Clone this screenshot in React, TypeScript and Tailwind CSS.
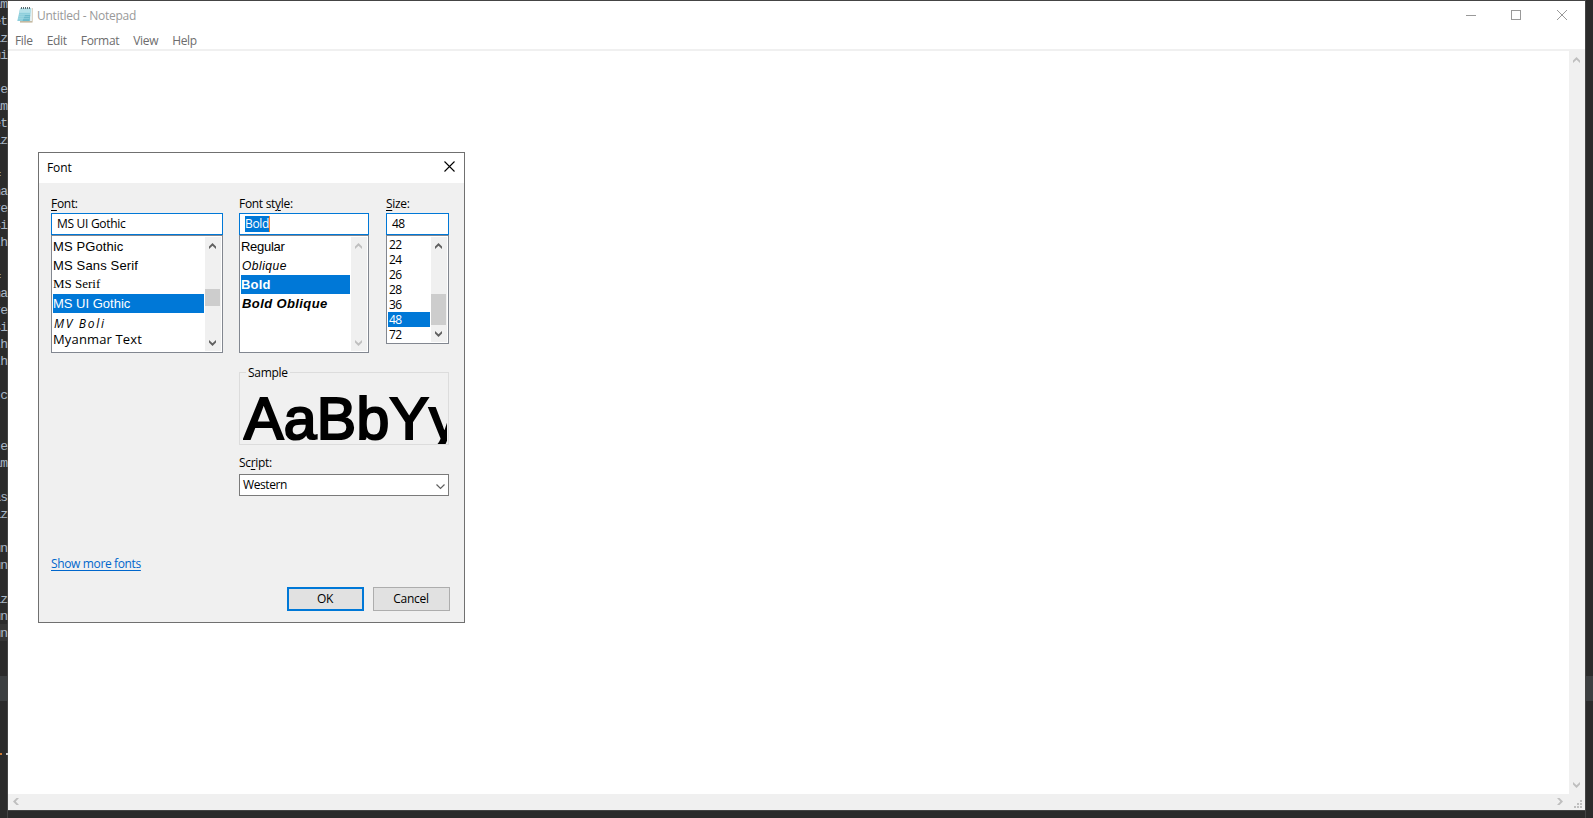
import type { ReactNode } from "react";

const codeRows = [
  "am", "et", "iz", "ui", "", "e", "am", "et", "iz", "", "= ", "ha", "re", "si", "th", "", "= ", "ha", "re", "si", "th", "th",
  "", "c", "\" ", "", "e", "am", "", "as", "iz", "", "un", "un", "", "iz", "un", "un",
];

type Direction = "up" | "down" | "left" | "right";

const chevrons: Record<Direction, string> = {
  up: "M3.5 0 L7 3.5 V6 L3.5 2.7 L0 6 V3.5 Z",
  down: "M3.5 6 L7 2.5 V0 L3.5 3.3 L0 0 V2.5 Z",
  left: "M0 3.5 L3.5 0 H6 L2.7 3.5 L6 7 H3.5 Z",
  right: "M6 3.5 L2.5 0 H0 L3.3 3.5 L0 7 H2.5 Z",
};

function Chevron({ dir, className }: { dir: Direction; className: string }) {
  const vertical = dir === "up" || dir === "down";
  return (
    <svg width={vertical ? 7 : 6} height={vertical ? 6 : 7} className={className}>
      <path d={chevrons[dir]} fill="currentColor" />
    </svg>
  );
}

function NotepadIcon() {
  return (
    <svg width="16" height="17" viewBox="0 0 16 17">
      <path d="M13 2 H15.5 V16.5 H3 V15 H13 Z" fill="#b9a98a" />
      <path d="M3.5 2 H15 V15.3 H3 Z" fill="#e4eff1" />
      <path d="M3.2 2 H14 L12.6 15 H0.3 Z" fill="#8fcfdc" />
      <path d="M3.2 2 H14 L13.4 7 H2.2 Z" fill="#b5e1e9" />
      <path d="M8 9 H13.2 L12.6 15 H5.5 Z" fill="#6dbacb" />
      <path d="M2.6 6.5 H13 M2.2 8.5 H12.8 M1.8 10.5 H12.6 M1.2 12.5 H12.4" stroke="#a5dbe5" strokeWidth="0.5" />
      <path d="M4.5 1 V3 M6.5 1 V3 M8.5 1 V3 M10.5 1 V3 M12.5 1 V3" stroke="#596b70" strokeWidth="1" />
    </svg>
  );
}

function Scrollbar({ active, children }: { active: boolean; children?: ReactNode }) {
  const tone = active ? "text-[#606060]" : "text-[#bfbfbf]";
  return (
    <div className="flex w-4 shrink-0 flex-col bg-[#f0f0f0]">
      <Chevron dir="up" className={`${tone} ml-1 mt-[6px] shrink-0`} />
      <div className="flex-1">{children}</div>
      <Chevron dir="down" className={`${tone} mb-[5px] ml-1 shrink-0`} />
    </div>
  );
}

function Label({ children, className = "" }: { children: ReactNode; className?: string }) {
  return <div className={`h-[18px] whitespace-pre leading-[17px] ${className}`}>{children}</div>;
}

function Key({ children }: { children: ReactNode }) {
  return <span className="underline underline-offset-2">{children}</span>;
}

function Dialog() {
  return (
    <div className="absolute left-[38px] top-[152px] flex h-[471px] w-[427px] flex-col border border-[#707070] bg-[#f0f0f0] text-black">
      <div className="flex h-[30px] shrink-0 items-start justify-between bg-white pl-2 pr-[9px] pt-[6px]">
        <span className="leading-[17px] tracking-[-0.1px]">Font</span>
        <svg width="11" height="11" className="mt-[2px]">
          <path d="M0.5 0.5 L10.5 10.5 M10.5 0.5 L0.5 10.5" stroke="#000" strokeWidth="1.1" />
        </svg>
      </div>

      <div className="flex pl-3 pt-3">
        <div className="w-[172px]">
          <Label className="tracking-[-0.3px]"><Key>F</Key>ont:</Label>
          <div className="h-[22px] border border-[#0078d7] bg-white pl-[5px] pt-[1px] leading-[17px] tracking-[-0.3px]">MS UI Gothic</div>
          <div className="flex h-[118px] justify-between border border-[#828790] bg-white p-px">
            <div className="w-[151px] overflow-hidden whitespace-nowrap font-['Liberation_Sans'] text-[13px] leading-[19px]">
              <div className="h-[19px] tracking-[0.1px]">MS PGothic</div>
              <div className="h-[19px] tracking-[0.15px]">MS Sans Serif</div>
              <div className="h-[19px] font-['Liberation_Serif'] text-[13px] leading-[18px]">MS Serif</div>
              <div className="h-[19px] bg-[#0078d7] text-white">MS UI Gothic</div>
              <div className="h-[19px] pl-px font-['Open_Sans'] text-[12px] italic leading-[21px] tracking-[1.7px]">MV Boli</div>
              <div className="h-[19px] font-['Open_Sans'] text-[13px] leading-[14px] tracking-[0.15px]">Myanmar Text</div>
            </div>
            <Scrollbar active><div className="mt-10 h-[17px] w-[15px] bg-[#cdcdcd]" /></Scrollbar>
          </div>
        </div>

        <div className="ml-4 w-[130px]">
          <Label className="tracking-[-0.3px]">Font st<Key>y</Key>le:</Label>
          <div className="flex h-[22px] border border-[#0078d7] bg-white pl-[5px] pt-[2px]">
            <span className="h-4 border-r border-[#ff8728] bg-[#0078d7] leading-[15px] tracking-[-0.3px] text-white">Bold</span>
          </div>
          <div className="flex h-[118px] justify-between border border-[#828790] bg-white p-px">
            <div className="w-[109px] overflow-hidden whitespace-nowrap font-['Liberation_Sans'] text-[13px] leading-[19px]">
              <div className="tracking-[-0.3px]">Regular</div>
              <div className="pl-px text-[12px] italic leading-[19px] tracking-[0.5px]">
                <div className="h-[19px] leading-[20px]">Oblique</div>
              </div>
              <div className="bg-[#0078d7] font-bold tracking-[0.2px] text-white">Bold</div>
              <div className="pl-px font-bold italic tracking-[0.4px]">Bold Oblique</div>
            </div>
            <Scrollbar active={false} />
          </div>
        </div>

        <div className="ml-[17px] w-[63px]">
          <Label className="tracking-[-0.3px]"><Key>S</Key>ize:</Label>
          <div className="h-[22px] border border-[#0078d7] bg-white pl-[5px] pt-[1px] leading-[17px] tracking-[-0.5px]">48</div>
          <div className="flex h-[109px] justify-between border border-[#828790] bg-white p-px">
            <div className="w-[42px] leading-[15px] tracking-[-0.6px]">
              {[22, 24, 26, 28, 36, 48, 72].map((n) => (
                <div key={n} className={n === 48 ? "h-[15px] bg-[#0078d7] pl-px text-white" : "h-[15px] pl-px"}>{n}</div>
              ))}
            </div>
            <Scrollbar active><div className="mt-[45px] h-[31px] w-[15px] bg-[#cdcdcd]" /></Scrollbar>
          </div>
        </div>
      </div>

      <div className="ml-[200px] mt-[19px] w-[210px]">
        <div className="h-[73px] border border-[#dcdcdc]">
          <div className="-mt-[9px] ml-[6px] h-[17px] w-[44px] bg-[#f0f0f0] pl-[2px] leading-[17px] tracking-[-0.3px]">Sample</div>
          <div className="ml-[3px] h-[63px] w-[204px] overflow-hidden whitespace-nowrap pl-px font-['Liberation_Sans'] text-[59px] leading-[76px] tracking-[0.3px] [-webkit-text-stroke:2.2px_#000]">AaBbYy</div>
        </div>
        <Label className="mb-[2px] mt-[9px] tracking-[-0.3px]">Sc<Key>r</Key>ipt:</Label>
        <div className="flex h-[22px] items-start justify-between border border-[#7a7a7a] bg-white pl-[3px] pr-[3px] pt-[1px]">
          <span className="leading-[17px] tracking-[-0.4px]">Western</span>
          <svg width="9" height="6" className="mt-[8px]"><path d="M0.5 0.5 L4.5 4.5 L8.5 0.5" fill="none" stroke="#606060" strokeWidth="1.2" /></svg>
        </div>
      </div>

      <div className="ml-3 mt-[59px] h-[17px] leading-[17px] tracking-[-0.36px] text-[#0066cc] underline underline-offset-2">Show more fonts</div>

      <div className="mt-[15px] flex justify-end gap-[9px] pr-[14px] text-center leading-[17px]">
        <div className="h-6 w-[77px] border-2 border-[#0078d7] bg-[#e1e1e1] pr-px pt-px tracking-[-0.3px]">OK</div>
        <div className="h-6 w-[77px] border border-[#adadad] bg-[#e1e1e1] pr-px pt-[2px] tracking-[-0.3px]">Cancel</div>
      </div>
    </div>
  );
}

export default function App() {
  return (
    <div className="relative flex h-[818px] w-[1593px] overflow-hidden bg-[#2b2b2b] font-['Open_Sans',sans-serif] text-[12px]">
      <div className="w-2 shrink-0 border-r border-[#444444] font-['Liberation_Mono',monospace] text-[13px] leading-[17px] tracking-[-1px] text-[#a9b7c6]">
        <div className="-mt-[4px] flex flex-col">
          {codeRows.map((row, i) => (
            <div key={i} className="flex h-[17px] justify-end whitespace-pre">{row}</div>
          ))}
        </div>
      </div>

      <div className="flex w-[1578px] shrink-0 flex-col border-r border-t border-[#444444]">
        <div className="flex h-[809px] shrink-0 flex-col bg-white">
          <div className="flex h-[30px] shrink-0 items-start pl-[9px] pt-[5px]">
            <NotepadIcon />
            <span className="ml-1 mt-[1px] leading-[17px] tracking-[-0.25px] text-[#999999]">Untitled - Notepad</span>
            <svg width="102" height="11" className="ml-auto mr-[17px] mt-1" fill="none" stroke="#999999" shapeRendering="crispEdges">
              <path d="M0 5.5 H10 M45.5 0.5 H54.5 V9.5 H45.5 Z" />
              <path d="M91 0 L101 10 M101 0 L91 10" shapeRendering="auto" />
            </svg>
          </div>
          <div className="flex h-[18px] shrink-0 gap-[14px] pl-[7px] pt-px leading-[17px] tracking-[-0.32px] text-[#6d6d6d]">
            <span>File</span><span>Edit</span><span>Format</span><span>View</span><span>Help</span>
          </div>
          <div className="h-[2px] shrink-0 bg-[#f0f0f0]" />
          <div className="flex flex-1">
            <div className="flex-1" />
            <div className="flex w-4 flex-col justify-between bg-[#f0f0f0] pb-[6px] pt-[6px] text-[#bfbfbf]">
              <Chevron dir="up" className="ml-1" />
              <Chevron dir="down" className="ml-1" />
            </div>
          </div>
          <div className="flex h-4 shrink-0 items-start bg-[#f0f0f0] pt-1 text-[#bfbfbf]">
            <Chevron dir="left" className="ml-[5px]" />
            <Chevron dir="right" className="ml-auto" />
            <svg width="8" height="8" className="ml-[11px] mr-[3px] mt-[2px]" fill="currentColor">
              <path d="M6 0h2v2H6z M3 3h2v2H3z M6 3h2v2H6z M0 6h2v2H0z M3 6h2v2H3z M6 6h2v2H6z" />
            </svg>
          </div>
        </div>
        <div className="h-px shrink-0 bg-[#444444]" />
      </div>

      <div className="flex flex-1 flex-col pt-[676px]"><div className="h-[25px] bg-[#3c3f41]" /></div>

      <div className="absolute left-0 top-[624px] h-[17px] w-[7px] bg-white/5" />
      <div className="absolute left-0 top-[676px] h-[25px] w-[7px] bg-[#3c3f41]" />
      <div className="absolute left-0 top-[753px] flex gap-1"><span className="h-[2px] w-[2px] bg-[#cc7832]" /><span className="h-[2px] w-[2px] bg-[#cccccc]" /></div>
      <Dialog />
    </div>
  );
}
